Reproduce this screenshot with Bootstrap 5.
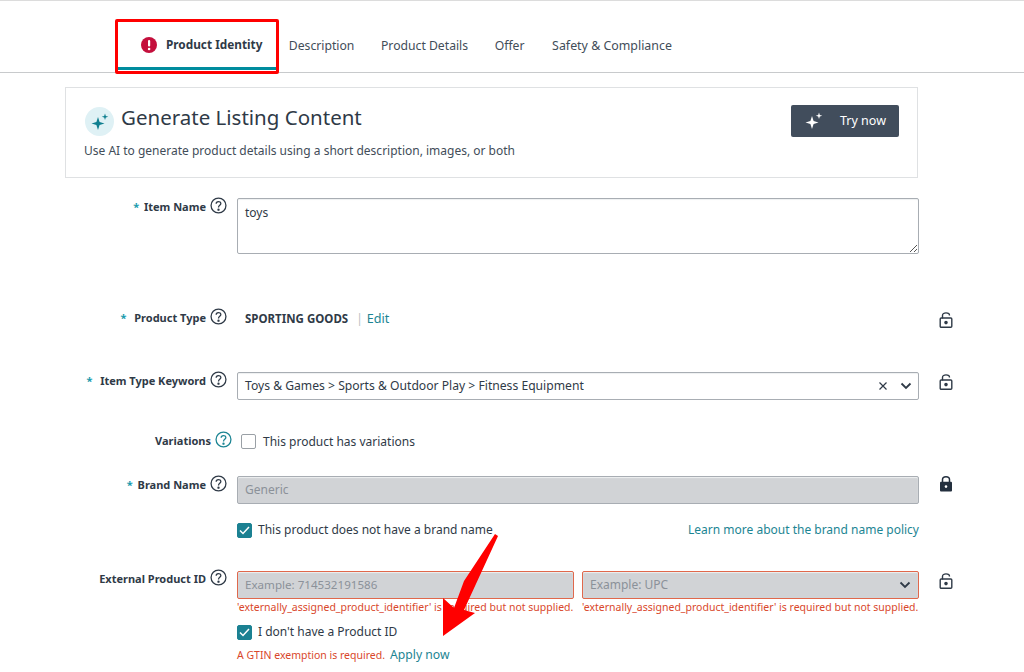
<!DOCTYPE html>
<html lang="en">
<head>
<meta charset="utf-8">
<title>Product Identity</title>
<link rel="stylesheet" href="https://cdn.jsdelivr.net/npm/bootstrap@5.3.0/dist/css/bootstrap.min.css">
<style>
html,body{height:672px;overflow:hidden;background:#fff}
body{font-family:"Noto Sans","Open Sans",sans-serif;font-size:12px;color:#2f3a47;border-top:1px solid #dcdcdc;position:relative}
.tabbar{height:72px;border-bottom:1px solid #c8cacc;padding-left:115px}
.tabitem{height:69px;display:flex;align-items:center;padding:21px 13.3px 0;color:#424d59;font-size:12.2px;white-space:nowrap}
.tabactive{width:162px;padding:21px 0 0 26px;border-bottom:3px solid #008c9e;font-weight:700;font-size:11.8px;color:#2f3a47;gap:9px;margin-right:-1.5px}
.tablast{font-size:12.4px;margin-left:1px}
.gencard{margin:14px 0 0 65px;width:853px;height:91px;border:1px solid #dfe1e3;padding:14px 18px 0 18px}
.genicon{width:29px;height:29px;border-radius:50%;background:#dff1f5;margin:5px 0 0 1px;flex:none}
.gentitle{font-size:20.5px;color:#2f3a47;line-height:30px;margin-left:7px}
.gensub{font-size:12px;color:#424d59;margin-top:6px;line-height:18px}
.trybtn{width:108px;height:32px;background:#414d5c;color:#fff;border-radius:2px;font-size:12.5px;gap:16px;border:0;margin:3px 0 0 0;padding:0 0 0 13px}
.formrow{display:flex}
.lblcol{width:237px;padding-right:10px;display:flex;justify-content:flex-end;align-items:center;gap:4px;font-weight:700;font-size:11px;color:#2f3a47;height:20px;white-space:nowrap;margin-top:-1px}
.fieldcol{width:682px}
.lockcol{width:55px;padding-left:20px}
.req{color:#1a9bae;font-weight:700;margin-right:2px}
.boxinput{border:1px solid #a8adb3;border-radius:2px;padding:0 7px;font-size:12px;color:#2f3a47;height:28px;display:flex;align-items:center;box-shadow:inset 0 1px 1px #eef0f1}
.boxtext{height:56px;align-items:flex-start;padding-top:5px;position:relative}
.boxkw{font-size:12.15px;padding-right:6px}
.boxgray{background:#d1d3d6;color:#8b9199}
.boxerr{border-color:#e0684c}
.boxsmall{font-size:11.6px}
.tealink{color:#1c8593;text-decoration:none}
.editlink{font-size:12.6px}
.applylink{font-size:12.2px;margin-left:5px}
.errtxt{color:#d9472b;font-size:10.5px;line-height:14px;white-space:nowrap}
.tick{width:15px;height:15px;border:1px solid #9aa0a6;border-radius:2px;display:inline-flex;align-items:center;justify-content:center;flex:none}
.tickon{background:#1b8192;border-color:#1b8192}
.halfcol{width:337px}
.redbox{position:absolute;left:115px;top:18px;width:164px;height:55px;border:3px solid #f00;border-radius:2px}
.redarrow{position:absolute;left:440px;top:530px}
.r1{margin-top:20px}.r2{margin-top:55px}.r3{margin-top:43px}.r4{margin-top:32px}.r5{margin-top:25px}.r6{margin-top:32px}
.lblup{margin-top:-2px}
.hlpicon{width:17px;height:17px;flex:none;margin-bottom:3px}
.lockdown{margin-top:1px}
.lockup{margin-top:-2px}
</style>
</head>
<body>
<nav class="tabbar d-flex">
  <div class="tabitem tabactive">
    <svg width="16" height="16" viewBox="0 0 16 16"><circle cx="8" cy="8" r="8" fill="#c40f3c"/><rect x="7" y="3" width="2.2" height="6.6" rx="1" fill="#fff"/><circle cx="8.1" cy="12" r="1.3" fill="#fff"/></svg>
    Product Identity
  </div>
  <div class="tabitem">Description</div>
  <div class="tabitem">Product Details</div>
  <div class="tabitem">Offer</div>
  <div class="tabitem tablast">Safety &amp; Compliance</div>
</nav>

<section class="gencard d-flex justify-content-between">
  <div>
    <div class="d-flex align-items-start">
      <span class="genicon d-flex align-items-center justify-content-center">
        <svg width="20" height="20" viewBox="0 0 20 20" fill="#0f7f90"><path d="M8 5 9.6 10 14.5 11.5 9.6 13 8 18 6.4 13 1.5 11.5 6.4 10Z"/><path d="M15 1.5 15.8 4 18.3 4.8 15.8 5.6 15 8 14.2 5.6 11.7 4.8 14.2 4Z"/></svg>
      </span>
      <span class="gentitle">Generate Listing Content</span>
    </div>
    <div class="gensub">Use AI to generate product details using a short description, images, or both</div>
  </div>
  <div>
    <button type="button" class="trybtn btn d-flex align-items-center">
      <svg width="20" height="20" viewBox="0 0 20 20" fill="#fff"><path d="M8 5 9.6 10 14.5 11.5 9.6 13 8 18 6.4 13 1.5 11.5 6.4 10Z"/><path d="M15 1.5 15.8 4 18.3 4.8 15.8 5.6 15 8 14.2 5.6 11.7 4.8 14.2 4Z"/></svg>
      Try now
    </button>
  </div>
</section>

<div class="formrow r1">
  <div class="lblcol"><span><span class="req">*</span>&nbsp;Item Name</span>
    <svg class="hlpicon" viewBox="0 0 16 16" fill="none" stroke="#2f3a47" stroke-width="1.2"><circle cx="8" cy="8" r="7"/><path d="M5.8 6.3C5.8 3.6 10.2 3.6 10.2 6.2 10.2 7.9 8 7.8 8 9.8"/><circle cx="8" cy="11.9" r=".5" fill="#2f3a47"/></svg>
  </div>
  <div class="fieldcol"><div class="boxinput boxtext">toys
    <svg class="position-absolute bottom-0 end-0" width="9" height="9" viewBox="0 0 9 9" stroke="#555" stroke-width="1"><path d="M1 8 8 1M5 8 8 5"/></svg>
  </div></div>
</div>

<div class="formrow r2">
  <div class="lblcol"><span><span class="req">*</span>&nbsp; Product Type</span>
    <svg class="hlpicon" viewBox="0 0 16 16" fill="none" stroke="#2f3a47" stroke-width="1.2"><circle cx="8" cy="8" r="7"/><path d="M5.8 6.3C5.8 3.6 10.2 3.6 10.2 6.2 10.2 7.9 8 7.8 8 9.8"/><circle cx="8" cy="11.9" r=".5" fill="#2f3a47"/></svg>
  </div>
  <div class="fieldcol d-flex align-items-center ps-2" style="height:20px">
    <strong style="font-size:11.5px">SPORTING GOODS</strong><span class="ms-2 me-1" style="color:#b9bec3">|</span><a class="tealink editlink" href="#">Edit</a>
  </div>
  <div class="lockcol lockdown">
    <svg width="14" height="18" viewBox="0 0 14 18" fill="none" stroke="#2f3a47" stroke-width="1.4"><path d="M3.5 7.5V4.5C3.5 1 10.5 1 10.5 4.5"/><rect x="1.2" y="7" width="11.6" height="9.3" rx="1"/><circle cx="7" cy="11.6" r="1.1" fill="#2f3a47"/></svg>
  </div>
</div>

<div class="formrow r3">
  <div class="lblcol"><span><span class="req">*</span>&nbsp; Item Type Keyword</span>
    <svg class="hlpicon" viewBox="0 0 16 16" fill="none" stroke="#2f3a47" stroke-width="1.2"><circle cx="8" cy="8" r="7"/><path d="M5.8 6.3C5.8 3.6 10.2 3.6 10.2 6.2 10.2 7.9 8 7.8 8 9.8"/><circle cx="8" cy="11.9" r=".5" fill="#2f3a47"/></svg>
  </div>
  <div class="fieldcol"><div class="boxinput boxkw justify-content-between"><span>Toys &amp; Games &gt; Sports &amp; Outdoor Play &gt; Fitness Equipment</span>
    <span class="d-flex align-items-center gap-2">
      <svg width="10" height="10" viewBox="0 0 10 10" stroke="#2f3a47" stroke-width="1.2"><path d="M1.5 1.5 8.5 8.5M8.5 1.5 1.5 8.5"/></svg>
      <svg class="ms-1" width="12" height="8" viewBox="0 0 12 8" fill="none" stroke="#2f3a47" stroke-width="1.8"><path d="M1.5 1.5 6 6 10.5 1.5"/></svg>
    </span>
  </div></div>
  <div class="lockcol">
    <svg width="14" height="18" viewBox="0 0 14 18" fill="none" stroke="#2f3a47" stroke-width="1.4"><path d="M3.5 7.5V4.5C3.5 1 10.5 1 10.5 4.5"/><rect x="1.2" y="7" width="11.6" height="9.3" rx="1"/><circle cx="7" cy="11.6" r="1.1" fill="#2f3a47"/></svg>
  </div>
</div>

<div class="formrow r4">
  <div class="lblcol" style="padding-right:5px"><span>Variations</span>
    <svg class="hlpicon" viewBox="0 0 16 16" fill="none" stroke="#1c8593" stroke-width="1.2"><circle cx="8" cy="8" r="7"/><path d="M5.8 6.3C5.8 3.6 10.2 3.6 10.2 6.2 10.2 7.9 8 7.8 8 9.8"/><circle cx="8" cy="11.9" r=".5" fill="#1c8593"/></svg>
  </div>
  <div class="fieldcol d-flex align-items-center ps-1" style="gap:7px"><span class="tick"></span><span>This product has variations</span></div>
</div>

<div class="formrow r5">
  <div class="lblcol"><span><span class="req">*</span> Brand Name</span>
    <svg class="hlpicon" viewBox="0 0 16 16" fill="none" stroke="#2f3a47" stroke-width="1.2"><circle cx="8" cy="8" r="7"/><path d="M5.8 6.3C5.8 3.6 10.2 3.6 10.2 6.2 10.2 7.9 8 7.8 8 9.8"/><circle cx="8" cy="11.9" r=".5" fill="#2f3a47"/></svg>
  </div>
  <div class="fieldcol">
    <div class="boxinput boxgray">Generic</div>
    <div class="d-flex align-items-center justify-content-between" style="margin-top:17px">
      <span class="d-flex align-items-center" style="gap:6px"><span class="tick tickon"><svg width="11" height="9" viewBox="0 0 11 9" fill="none" stroke="#fff" stroke-width="1.5"><path d="M1 4.5 4 7.5 10 1"/></svg></span>This product does not have a brand name</span>
      <a class="tealink" href="#">Learn more about the brand name policy</a>
    </div>
  </div>
  <div class="lockcol lockup">
    <svg width="14" height="18" viewBox="0 0 14 18"><path d="M3.5 8V4.5C3.5 .8 10.5 .8 10.5 4.5V8" fill="none" stroke="#232f3e" stroke-width="1.5"/><rect x="1" y="6.8" width="12" height="9.7" rx="1" fill="#232f3e"/><circle cx="7" cy="11.6" r="1.3" fill="#fff"/></svg>
  </div>
</div>

<div class="formrow r6">
  <div class="lblcol lblup"><span>External Product ID</span>
    <svg class="hlpicon" viewBox="0 0 16 16" fill="none" stroke="#2f3a47" stroke-width="1.2"><circle cx="8" cy="8" r="7"/><path d="M5.8 6.3C5.8 3.6 10.2 3.6 10.2 6.2 10.2 7.9 8 7.8 8 9.8"/><circle cx="8" cy="11.9" r=".5" fill="#2f3a47"/></svg>
  </div>
  <div class="fieldcol">
    <div class="d-flex justify-content-between">
      <div class="halfcol">
        <div class="boxinput boxgray boxerr boxsmall">Example: 714532191586</div>
        <div class="errtxt" style="margin-top:1px">'externally_assigned_product_identifier' is required but not supplied.</div>
      </div>
      <div class="halfcol">
        <div class="boxinput boxgray boxerr justify-content-between"><span>Example: UPC</span>
          <svg width="12" height="8" viewBox="0 0 12 8" fill="none" stroke="#2f3a47" stroke-width="1.8"><path d="M1.5 1.5 6 6 10.5 1.5"/></svg>
        </div>
        <div class="errtxt" style="margin-top:1px">'externally_assigned_product_identifier' is required but not supplied.</div>
      </div>
    </div>
    <div class="d-flex align-items-center" style="margin-top:9px;gap:6px"><span class="tick tickon"><svg width="11" height="9" viewBox="0 0 11 9" fill="none" stroke="#fff" stroke-width="1.5"><path d="M1 4.5 4 7.5 10 1"/></svg></span>I don't have a Product ID</div>
    <div class="d-flex align-items-center" style="margin-top:5px"><span class="errtxt">A GTIN exemption is required.</span><a class="tealink applylink" href="#">Apply now</a></div>
  </div>
  <div class="lockcol">
    <svg width="14" height="18" viewBox="0 0 14 18" fill="none" stroke="#2f3a47" stroke-width="1.4"><path d="M3.5 7.5V4.5C3.5 1 10.5 1 10.5 4.5"/><rect x="1.2" y="7" width="11.6" height="9.3" rx="1"/><circle cx="7" cy="11.6" r="1.1" fill="#2f3a47"/></svg>
  </div>
</div>

<div class="redbox"></div>
<svg class="redarrow" width="62" height="110" viewBox="0 0 62 110"><path d="M58 5 55 3 24 50 14 77 3 67 3 105 35 82 24 79Z" fill="#f00"/></svg>
</body>
</html>
